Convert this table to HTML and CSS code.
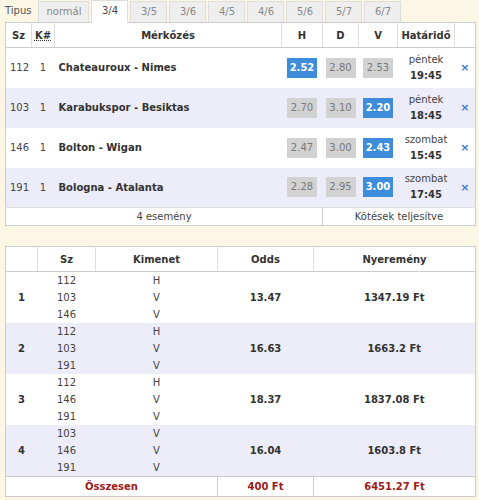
FILE: index.html
```html
<!DOCTYPE html>
<html lang="hu">
<head>
<meta charset="utf-8">
<link rel="stylesheet" href="styles.css">
</head>
<body>
<div class="page">
  <div class="tabs">
    <span class="tabs-label">Tipus</span>
    <span class="tab tab-wide">normál</span>
    <span class="tab active">3/4</span>
    <span class="tab">3/5</span>
    <span class="tab">3/6</span>
    <span class="tab">4/5</span>
    <span class="tab">4/6</span>
    <span class="tab">5/6</span>
    <span class="tab">5/7</span>
    <span class="tab">6/7</span>
  </div>
  <table class="matches">
    <thead>
      <tr>
        <th class="c-sz">Sz</th>
        <th class="c-k"><abbr>K#</abbr></th>
        <th class="c-m">Mérkőzés</th>
        <th class="c-h1">H</th>
        <th class="c-d">D</th>
        <th class="c-v">V</th>
        <th class="c-h">Határidő</th>
        <th class="c-x"></th>
      </tr>
    </thead>
    <tbody>
      <tr>
        <td class="num">112</td><td class="k">1</td><td class="match">Chateauroux - Nimes</td>
        <td class="odd"><span class="box sel">2.52</span></td><td class="odd"><span class="box">2.80</span></td><td class="odd"><span class="box">2.53</span></td>
        <td class="dl">péntek<br><b>19:45</b></td><td class="x">×</td>
      </tr>
      <tr class="alt">
        <td class="num">103</td><td class="k">1</td><td class="match">Karabukspor - Besiktas</td>
        <td class="odd"><span class="box">2.70</span></td><td class="odd"><span class="box">3.10</span></td><td class="odd"><span class="box sel">2.20</span></td>
        <td class="dl">péntek<br><b>18:45</b></td><td class="x">×</td>
      </tr>
      <tr>
        <td class="num">146</td><td class="k">1</td><td class="match">Bolton - Wigan</td>
        <td class="odd"><span class="box">2.47</span></td><td class="odd"><span class="box">3.00</span></td><td class="odd"><span class="box sel">2.43</span></td>
        <td class="dl">szombat<br><b>15:45</b></td><td class="x">×</td>
      </tr>
      <tr class="alt">
        <td class="num">191</td><td class="k">1</td><td class="match">Bologna - Atalanta</td>
        <td class="odd"><span class="box">2.28</span></td><td class="odd"><span class="box">2.95</span></td><td class="odd"><span class="box sel">3.00</span></td>
        <td class="dl">szombat<br><b>17:45</b></td><td class="x">×</td>
      </tr>
    </tbody>
    <tfoot>
      <tr>
        <td colspan="4" class="foot-l">4 esemény</td>
        <td colspan="4" class="foot-r">Kötések teljesítve</td>
      </tr>
    </tfoot>
  </table>

  <table class="combos">
    <thead>
      <tr>
        <th class="d-n"></th>
        <th class="d-sz">Sz</th>
        <th class="d-k">Kimenet</th>
        <th class="d-o">Odds</th>
        <th class="d-w">Nyeremény</th>
      </tr>
    </thead>
    <tbody>
      <tr>
        <td class="gn">1</td>
        <td class="ls">112<br>103<br>146</td>
        <td class="lk">H<br>V<br>V</td>
        <td class="go">13.47</td>
        <td class="gw">1347.19 Ft</td>
      </tr>
      <tr class="alt">
        <td class="gn">2</td>
        <td class="ls">112<br>103<br>191</td>
        <td class="lk">H<br>V<br>V</td>
        <td class="go">16.63</td>
        <td class="gw">1663.2 Ft</td>
      </tr>
      <tr>
        <td class="gn">3</td>
        <td class="ls">112<br>146<br>191</td>
        <td class="lk">H<br>V<br>V</td>
        <td class="go">18.37</td>
        <td class="gw">1837.08 Ft</td>
      </tr>
      <tr class="alt">
        <td class="gn">4</td>
        <td class="ls">103<br>146<br>191</td>
        <td class="lk">V<br>V<br>V</td>
        <td class="go">16.04</td>
        <td class="gw">1603.8 Ft</td>
      </tr>
    </tbody>
    <tfoot>
      <tr>
        <td colspan="3" class="sum">Összesen</td>
        <td class="sum sum-b">400 Ft</td>
        <td class="sum sum-b">6451.27 Ft</td>
      </tr>
    </tfoot>
  </table>
</div>
</body>
</html>
```

FILE: styles.css
```css
html, body {
  margin: 0;
  padding: 0;
}
body {
  background: #fcf6e4;
  font-family: "DejaVu Sans", Verdana, sans-serif;
  font-size: 10px;
  color: #333;
}
.page {
  padding: 0 3px 0 5px;
}
.tabs {
  display: flex;
  align-items: flex-end;
  gap: 2px;
  height: 22px;
}
.tabs-label {
  color: #555;
  padding: 0 4px 6px 0;
  margin-right: 1px;
}
.tab {
  box-sizing: border-box;
  width: 37px;
  height: 21px;
  line-height: 20px;
  text-align: center;
  color: #888;
  background: #eee;
  border: 1px solid #ddd;
  border-bottom: none;
}
.tab-wide {
  width: 51px;
}
.tab.active {
  background: #fff;
  color: #444;
  height: 23px;
  margin-bottom: -1px;
  position: relative;
  z-index: 1;
}
table {
  border-collapse: collapse;
  width: 471px;
  background: #fff;
  border: 1px solid #ccc;
}
th {
  font-weight: bold;
  color: #333;
  height: 24px;
  padding: 0;
  border-bottom: 1px solid #ccc;
  border-right: 1px solid #ddd;
  text-align: center;
}
th:last-child {
  border-right: none;
}
abbr {
  text-decoration: underline dotted;
}
td {
  padding: 0;
}
.matches tbody tr {
  height: 40px;
}
tr.alt td {
  background: #ecedf8;
}
.c-sz { width: 25px; }
.c-k { width: 22px; }
.c-h1 { width: 40px; }
.c-d { width: 35px; }
.c-v { width: 38px; }
.c-h { width: 56px; }
.c-x { width: 20px; }
.num {
  padding-left: 4px;
  color: #444;
}
.k {
  text-align: center;
  color: #444;
}
.match {
  font-weight: bold;
  padding-left: 4px;
}
.odd {
  text-align: center;
}
.box {
  display: inline-block;
  width: 30px;
  height: 20px;
  line-height: 20px;
  text-align: center;
  background: #d2d2d2;
  color: #777;
}
.box.sel {
  background: #3d8ddb;
  color: #fff;
  font-weight: bold;
}
.dl {
  text-align: center;
  color: #444;
  line-height: 16px;
}
.dl b {
  color: #333;
}
.x {
  text-align: center;
  color: #3d7fd0;
  font-weight: bold;
  font-size: 11px;
}
.matches tfoot td {
  height: 17px;
  text-align: center;
  color: #444;
  border-top: 1px solid #ddd;
}
.foot-l {
  border-right: 1px solid #ccc;
}
.combos {
  margin-top: 20px;
}
.d-n { width: 31px; }
.d-sz { width: 57px; }
.d-k { width: 121px; }
.d-o { width: 95px; }
.combos tbody td {
  height: 51px;
}
.gn {
  font-weight: bold;
  padding-left: 12px;
}
.ls {
  text-align: center;
  line-height: 17px;
  color: #444;
}
.lk {
  text-align: center;
  line-height: 17px;
  color: #444;
}
.go, .gw {
  text-align: center;
  font-weight: bold;
}
.combos tfoot td {
  height: 19px;
  border-top: 1px solid #ccc;
}
.sum {
  text-align: center;
  font-weight: bold;
  color: #9c1a1a;
}
.sum-b {
  border-left: 1px solid #ccc;
}
```
